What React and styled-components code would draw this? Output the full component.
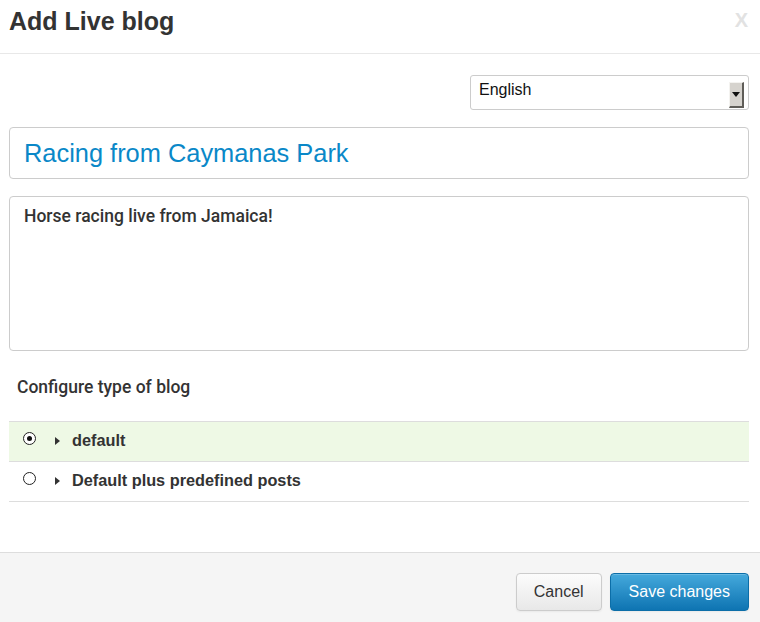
import React from "react";
import styled, { createGlobalStyle } from "styled-components";

const Global = createGlobalStyle`
  html, body { margin: 0; padding: 0; background: #fff; }
  body { font-family: "Liberation Sans", Arial, sans-serif; color: #333; }
  * { box-sizing: border-box; }
`;

const Modal = styled.div`
  width: 760px;
  height: 622px;
  display: flex;
  flex-direction: column;
  background: #fff;
`;

const Header = styled.div`
  height: 54px;
  border-bottom: 1px solid #e8e8e8;
  display: flex;
  align-items: flex-start;
  justify-content: space-between;
  padding: 3px 12px 0 9px;
`;

const Title = styled.h3`
  margin: 0;
  font-family: "Liberation Sans", Arial, sans-serif;
  font-weight: bold;
  font-size: 25px;
  line-height: 36px;
  color: #333;
`;

const Close = styled.button`
  border: 0;
  background: none;
  padding: 0;
  margin-top: 5px;
  font-family: "Liberation Sans", Arial, sans-serif;
  font-weight: bold;
  font-size: 20px;
  line-height: 24px;
  color: #e2e2e2;
  cursor: pointer;
`;

const Body = styled.div`
  flex: 1;
  padding: 21px 11px 0 9px;
  display: flex;
  flex-direction: column;
`;

const SelectRow = styled.div`
  display: flex;
  justify-content: flex-end;
  margin-bottom: 17px;
`;

const SelectBox = styled.div`
  width: 279px;
  height: 35px;
  border: 1px solid #ccc;
  border-radius: 3px;
  display: flex;
  align-items: center;
  justify-content: space-between;
  padding: 0 4px 0 8px;
  font-size: 16px;
  color: #111;
`;

const SelectText = styled.span`
  margin-top: -6px;
`;

const SelectArrow = styled.span`
  width: 15px;
  height: 26px;
  margin-top: 4px;
  background: #d6d3ce;
  border-top: 1px solid #f4f3f0;
  border-left: 1px solid #f4f3f0;
  border-right: 2px solid #5f5d58;
  border-bottom: 2px solid #5f5d58;
  display: flex;
  align-items: center;
  justify-content: center;
`;

const TitleInput = styled.div`
  height: 52px;
  border: 1px solid #ccc;
  border-radius: 4px;
  display: flex;
  align-items: center;
  padding: 0 14px;
  font-size: 25.4px;
  color: #0a88c8;
  margin-bottom: 17px;
`;

const TextArea = styled.div`
  height: 155px;
  border: 1px solid #ccc;
  border-radius: 4px;
  padding: 8px 14px;
  font-family: Roboto, "Liberation Sans", sans-serif;
  font-weight: 500;
  font-size: 17.5px;
  line-height: 22px;
  color: #333;
`;

const SectionLabel = styled.div`
  margin: 25px 0 0 8px;
  font-family: Roboto, "Liberation Sans", sans-serif;
  font-weight: 500;
  font-size: 17.5px;
  line-height: 22px;
  height: 45px;
  color: #333;
`;

const Table = styled.div`
  border-top: 1px solid #ddd;
`;

const Row = styled.div`
  height: 40px;
  border-bottom: 1px solid #ddd;
  background: ${(p) => (p.$active ? "#eef9e5" : "#fff")};
  display: flex;
  align-items: center;
  padding: 0 0 2px 14px;
`;

const Radio = styled.span`
  width: 13px;
  height: 13px;
  border-radius: 50%;
  border: 1px solid #222;
  background: #fff;
  display: flex;
  align-items: center;
  justify-content: center;
  margin-right: 19px;
  margin-top: -5px;
  &::after {
    content: "";
    width: 5px;
    height: 5px;
    border-radius: 50%;
    background: ${(p) => (p.$checked ? "#111" : "transparent")};
  }
`;

const Caret = styled.span`
  width: 0;
  height: 0;
  border-top: 4px solid transparent;
  border-bottom: 4px solid transparent;
  border-left: 5px solid #333;
  margin-right: 12px;
`;

const RowText = styled.span`
  font-family: "Liberation Sans", Arial, sans-serif;
  font-weight: bold;
  font-size: 16.3px;
  color: #333;
`;

const Footer = styled.div`
  height: 70px;
  border-top: 1px solid #ddd;
  background: #f5f5f5;
  display: flex;
  justify-content: flex-end;
  align-items: flex-start;
  gap: 8px;
  padding: 20px 11px 0 0;
`;

const Button = styled.button`
  height: 38px;
  padding: 0 ${(p) => (p.$primary ? "18px" : "17px")};
  border-radius: 4px;
  font-family: "Liberation Sans", Arial, sans-serif;
  font-size: 16px;
  cursor: pointer;
  border: 1px solid ${(p) => (p.$primary ? "#0c6ea8" : "#ccc")};
  color: ${(p) => (p.$primary ? "#fff" : "#333")};
  background: ${(p) =>
    p.$primary
      ? "linear-gradient(to bottom, #45a9dc, #0e74b2)"
      : "linear-gradient(to bottom, #fcfcfc, #e8e8e8)"};
  box-shadow: inset 0 1px 0 rgba(255,255,255,.2), 0 1px 2px rgba(0,0,0,.05);
`;

export default function App() {
  return (
    <Modal>
      <Global />
      <Header>
        <Title>Add Live blog</Title>
        <Close>X</Close>
      </Header>
      <Body>
        <SelectRow>
          <SelectBox>
            <SelectText>English</SelectText>
            <SelectArrow>
              <svg width="8" height="5" viewBox="0 0 8 5">
                <path d="M0 0H8L4 5Z" fill="#111" />
              </svg>
            </SelectArrow>
          </SelectBox>
        </SelectRow>
        <TitleInput>Racing from Caymanas Park</TitleInput>
        <TextArea>Horse racing live from Jamaica!</TextArea>
        <SectionLabel>Configure type of blog</SectionLabel>
        <Table>
          <Row $active>
            <Radio $checked />
            <Caret />
            <RowText>default</RowText>
          </Row>
          <Row>
            <Radio />
            <Caret />
            <RowText>Default plus predefined posts</RowText>
          </Row>
        </Table>
      </Body>
      <Footer>
        <Button>Cancel</Button>
        <Button $primary>Save changes</Button>
      </Footer>
    </Modal>
  );
}
